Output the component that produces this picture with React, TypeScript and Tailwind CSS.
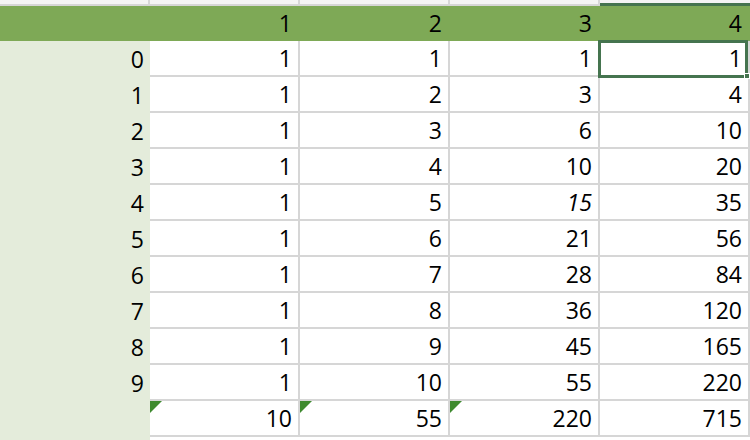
import React from 'react';

const ROWS = [
  [1, 1, 1, 1],
  [1, 2, 3, 4],
  [1, 3, 6, 10],
  [1, 4, 10, 20],
  [1, 5, 15, 35],
  [1, 6, 21, 56],
  [1, 7, 28, 84],
  [1, 8, 36, 120],
  [1, 9, 45, 165],
  [1, 10, 55, 220],
];
const TOTALS = [10, 55, 220, 715];

function Flag() {
  return (
    <svg className="absolute left-0 top-0" width="12" height="12" viewBox="0 0 12 12">
      <polygon points="0,0 12,0 0,12" fill="#3f8a2f" />
    </svg>
  );
}

export default function App() {
  return (
    <div
      className="relative h-[440px] w-[750px] overflow-hidden bg-white text-[23px] text-black"
      style={{ fontFamily: '"Open Sans", "Noto Sans", sans-serif' }}
    >
      {/* partial row above header */}
      <div className="flex h-[6px] bg-[#f4f4f4]">
        <div className="w-[150px] border-b-2 border-r-2 border-[#d6d6d6]" />
        <div className="w-[150px] border-b-2 border-r-2 border-[#d6d6d6]" />
        <div className="w-[150px] border-b-2 border-r-2 border-[#d6d6d6]" />
        <div className="w-[150px] border-b-2 border-r-2 border-[#d6d6d6]" />
        <div className="w-[150px] border-b-[3px] border-[#45744f]" />
      </div>

      {/* header */}
      <div className="flex h-[35px] items-center bg-[#7ea956] leading-none">
        <div className="w-[150px]" />
        {[1, 2, 3, 4].map((c) => (
          <div key={c} className="w-[150px] pr-[8px] text-right">
            {c}
          </div>
        ))}
      </div>

      {ROWS.map((r, i) => (
        <div key={i} className="flex h-[36px] leading-none">
          <div className="flex w-[150px] items-center justify-end bg-[#e4ecdb] pr-[6px]">{i}</div>
          {r.map((v, j) => (
            <div
              key={j}
              className={`flex w-[150px] items-center justify-end border-b-2 border-r-2 border-[#d6d6d6] pr-[6px] ${
                i === 4 && j === 2 ? 'italic' : ''
              }`}
            >
              {v}
            </div>
          ))}
        </div>
      ))}

      {/* totals */}
      <div className="flex h-[36px] leading-none">
        <div className="w-[150px] bg-[#e4ecdb]" />
        {TOTALS.map((v, j) => (
          <div
            key={j}
            className="relative flex w-[150px] items-center justify-end border-b-2 border-r-2 border-[#d6d6d6] pr-[6px]"
          >
            {j < 3 && <Flag />}
            {v}
          </div>
        ))}
      </div>
      <div className="flex h-[3px]">
        <div className="w-[150px] bg-[#e4ecdb]" />
      </div>

      {/* selected cell */}
      <div className="pointer-events-none absolute left-[598px] top-[40px] h-[38px] w-[150px] border-[3px] border-[#45744f]" />
      <div className="absolute left-[744px] top-[73px] h-[6px] w-[6px] border border-white bg-[#45744f]" />
    </div>
  );
}
